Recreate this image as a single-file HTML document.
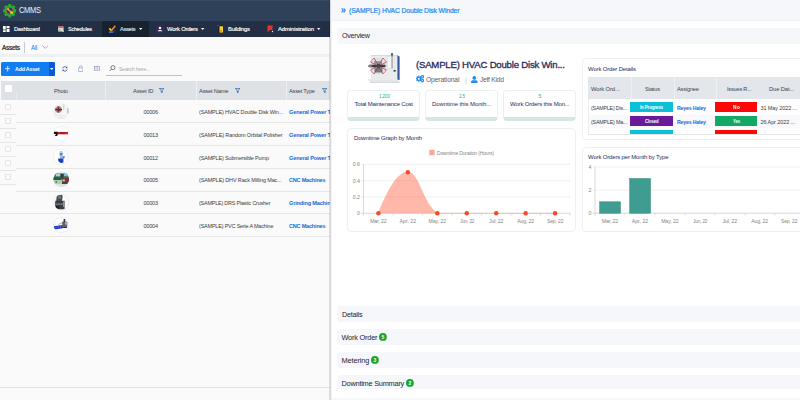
<!DOCTYPE html>
<html><head><meta charset="utf-8">
<style>
*{box-sizing:border-box;margin:0;padding:0}
html,body{width:800px;height:400px;overflow:hidden;background:#fff;font-family:"Liberation Sans",sans-serif;}
body{position:relative}
.abs{position:absolute}
.t{position:absolute;white-space:nowrap;line-height:1}
#left{position:absolute;left:0;top:0;width:330px;height:400px;background:#fafafa;overflow:hidden}
#right{position:absolute;left:330px;top:0;width:470px;height:400px;background:#fff;overflow:hidden}
.bar{position:absolute;left:6.6px;width:470px;height:16px;background:#f5f7fb;border-radius:3px}
.card{position:absolute;background:#fff;border:0.8px solid #edeff2;border-radius:4px}
.hl{position:absolute;height:0.8px;background:#e6e6e6}
.cb{position:absolute;left:4.5px;width:6.6px;height:6.6px;background:#fff;border:0.7px solid #e3e3e3;border-radius:1px}
.badge{position:absolute;height:10px}
</style></head><body>
<div id="left">
<!-- header -->
<div class="abs" style="left:0;top:0;width:330px;height:20.5px;background:#2f4159"></div>
<div class="abs" style="left:0;top:0;width:330px;height:1px;background:#384b64"></div>
<div class="abs" style="left:0;top:20.5px;width:330px;height:16px;background:#222f45"></div>
<div class="abs" style="left:102px;top:20.5px;width:47px;height:16px;background:#18222f"></div>
<!-- logo gear -->
<svg class="abs" style="left:2.8px;top:4.2px" width="13.4" height="13.4" viewBox="0 0 14 14">
  <g fill="#22b02e"><circle cx="7" cy="7" r="5.7"/>
  <rect x="5.5" y="0" width="3" height="14" rx="0.8"/><rect x="0" y="5.5" width="14" height="3" rx="0.8"/>
  <rect x="5.5" y="0" width="3" height="14" rx="0.8" transform="rotate(45 7 7)"/><rect x="5.5" y="0" width="3" height="14" rx="0.8" transform="rotate(-45 7 7)"/></g>
  <circle cx="7" cy="7" r="3.9" fill="#1f3f7a"/>
  <circle cx="7" cy="7" r="3.7" fill="none" stroke="#c87820" stroke-width="0.8"/>
  <path d="M5.4 5.6 L8.8 8.8" stroke="#f59a1c" stroke-width="1.5" stroke-linecap="round"/>
  <circle cx="9" cy="9" r="1.5" fill="#fbc62c"/>
  <circle cx="5.2" cy="5.3" r="1.1" fill="#f7a81c"/>
</svg>
<!-- nav icons -->
<svg class="abs" style="left:3px;top:25.5px" width="6.5" height="6.5" viewBox="0 0 13 13"><g fill="#fff"><rect x="0" y="0" width="5.5" height="7"/><rect x="7" y="0" width="6" height="4"/><rect x="0" y="8.5" width="5.5" height="4.5"/><rect x="7" y="5.5" width="6" height="7.5"/></g></svg>
<svg class="abs" style="left:57.5px;top:26px" width="6.4" height="6.4" viewBox="0 0 14 14"><rect x="0.5" y="1" width="11.5" height="11" fill="#f4f4f4"/><rect x="0.5" y="1" width="11.5" height="3" fill="#d9433a"/><g fill="#8a93a6"><rect x="2" y="5.5" width="2" height="2"/><rect x="5" y="5.5" width="2" height="2"/><rect x="8" y="5.5" width="2" height="2"/><rect x="2" y="8.5" width="2" height="2"/><rect x="5" y="8.5" width="2" height="2"/></g><circle cx="11.5" cy="11.5" r="2" fill="#f0b429"/></svg>
<svg class="abs" style="left:108px;top:24.5px" width="9" height="9" viewBox="0 0 18 18"><rect x="2" y="12.6" width="8.6" height="3.4" fill="#3f6fe0"/><path d="M11 9L16 8.5L15.5 15.5L11 15z" fill="#1c2f7a"/><path d="M2.6 6.4L7 11.6" fill="none" stroke="#ffd21a" stroke-width="3.2"/><path d="M6.2 12L14.6 1.4" fill="none" stroke="#f58a1c" stroke-width="3"/></svg>
<svg class="abs" style="left:155.8px;top:24.5px" width="8" height="8" viewBox="0 0 16 16"><circle cx="8" cy="8" r="7.3" fill="#2a1f6e" stroke="#7a3b3b" stroke-width="0.8"/><circle cx="8" cy="6" r="2.6" fill="#fff"/><path d="M3.5 12.5 C3.5 9 12.5 9 12.5 12.5z" fill="#fff"/></svg>
<svg class="abs" style="left:216.5px;top:24.8px" width="7" height="8" viewBox="0 0 14 16"><rect x="2" y="1" width="10" height="14" fill="#1b2240"/><rect x="5" y="2.5" width="7" height="12.5" fill="#f7d024"/><rect x="6.5" y="10" width="3" height="5" fill="#f08a1c"/><circle cx="2" cy="1" r="1" fill="#d33"/></svg>
<svg class="abs" style="left:266.8px;top:24.8px" width="7" height="8" viewBox="0 0 14 16"><path d="M1 1 H11 V10 L6 10 L1 15z" fill="#e5352b"/><circle cx="11" cy="13" r="1.5" fill="#dfe6f2"/></svg>
<!-- carets -->
<svg class="abs" style="left:139.2px;top:27.5px" width="3.4" height="2" viewBox="0 0 4 2.4"><path d="M0 0H4L2 2.4z" fill="#fff"/></svg>
<svg class="abs" style="left:201.4px;top:27.5px" width="3.4" height="2" viewBox="0 0 4 2.4"><path d="M0 0H4L2 2.4z" fill="#fff"/></svg>
<svg class="abs" style="left:317.4px;top:27.5px" width="3.4" height="2" viewBox="0 0 4 2.4"><path d="M0 0H4L2 2.4z" fill="#fff"/></svg>
<!-- breadcrumb bar -->
<div class="abs" style="left:24.3px;top:42px;width:0.7px;height:10.5px;background:#c9c9c9"></div>
<svg class="abs" style="left:41.8px;top:45.2px" width="6.6" height="4" viewBox="0 0 6.6 4"><path d="M0.4 0.4L3.3 3.4L6.2 0.4" fill="none" stroke="#8a93b5" stroke-width="0.8"/></svg>
<div class="abs" style="left:0;top:54.2px;width:330px;height:2.8px;background:#eff0f4"></div>
<!-- toolbar -->
<div class="abs" style="left:0.5px;top:61.5px;width:54.5px;height:14.5px;background:#117df0;border-radius:1.5px"></div>
<div class="abs" style="left:48.5px;top:61.5px;width:6.5px;height:14.5px;background:#0b59d4;border-radius:0 1.5px 1.5px 0"></div>
<svg class="abs" style="left:5px;top:66.3px" width="5.4" height="5.4" viewBox="0 0 5.4 5.4"><path d="M2.7 0V5.4M0 2.7H5.4" stroke="#fff" stroke-width="0.8"/></svg>
<svg class="abs" style="left:50.3px;top:68px" width="3.4" height="2" viewBox="0 0 3.4 2"><path d="M0 0H3.4L1.7 2z" fill="#fff"/></svg>
<svg class="abs" style="left:61.8px;top:65.8px" width="5.8" height="5.8" viewBox="0 0 13 13"><path d="M1.5 5.5 A5 5 0 0 1 10.5 3.5" fill="none" stroke="#27477f" stroke-width="1.7"/><path d="M11.5 7.5 A5 5 0 0 1 2.5 9.5" fill="none" stroke="#27477f" stroke-width="1.7"/><path d="M11.8 0.8V4.8H7.8z" fill="#27477f"/><path d="M1.2 12.2V8.2H5.2z" fill="#27477f"/></svg>
<svg class="abs" style="left:78px;top:64.8px" width="5.4" height="6.9" viewBox="0 0 10.8 13.8"><rect x="0.8" y="5.6" width="9.2" height="7.4" rx="0.8" fill="none" stroke="#8fa0c8" stroke-width="1.4"/><path d="M3 5.6V3.6a2.4 2.4 0 0 1 4.8 0V5.6" fill="none" stroke="#8fa0c8" stroke-width="1.3"/></svg>
<svg class="abs" style="left:93.9px;top:65.9px" width="5.8" height="5.4" viewBox="0 0 11.6 10.8"><rect x="0.7" y="0.7" width="10.2" height="9.4" fill="none" stroke="#8c98bf" stroke-width="1.3"/><path d="M4.1 0.7V10.1M7.5 0.7V10.1" stroke="#8c98bf" stroke-width="1.1"/></svg>
<svg class="abs" style="left:109.3px;top:65.3px" width="6.6" height="6.6" viewBox="0 0 13.2 13.2"><circle cx="8" cy="5.2" r="4" fill="none" stroke="#4b5563" stroke-width="1.5"/><path d="M5 8.2L1 12.2" stroke="#4b5563" stroke-width="1.6"/></svg>
<div class="abs" style="left:106px;top:74.7px;width:76px;height:0.8px;background:#c2c2c2"></div>
<!-- table header -->
<div class="abs" style="left:1px;top:81px;width:329px;height:18.7px;background:#dee1e6"></div>
<div class="abs" style="left:105.3px;top:81px;width:1px;height:18.7px;background:#eceef1"></div>
<div class="abs" style="left:196.3px;top:81px;width:1px;height:18.7px;background:#eceef1"></div>
<div class="abs" style="left:286.3px;top:81px;width:1px;height:18.7px;background:#eceef1"></div>
<div class="abs" style="left:15.6px;top:93px;width:0.8px;height:6.7px;background:#e9ebee"></div>
<div class="abs" style="left:5px;top:85px;width:6.6px;height:6.6px;background:#fff;border-radius:1px"></div>
<svg class="abs" style="left:158.7px;top:87.7px" width="5.4" height="5.4" viewBox="0 0 10.8 10.8"><path d="M0.8 0.8H10L6.4 5V9.6L4.4 8.4V5z" fill="none" stroke="#2458a6" stroke-width="1.4" stroke-linejoin="round"/></svg>
<svg class="abs" style="left:234.7px;top:87.7px" width="5.4" height="5.4" viewBox="0 0 10.8 10.8"><path d="M0.8 0.8H10L6.4 5V9.6L4.4 8.4V5z" fill="none" stroke="#2458a6" stroke-width="1.4" stroke-linejoin="round"/></svg>
<svg class="abs" style="left:321.7px;top:87.7px" width="5.4" height="5.4" viewBox="0 0 10.8 10.8"><path d="M0.8 0.8H10L6.4 5V9.6L4.4 8.4V5z" fill="none" stroke="#2458a6" stroke-width="1.4" stroke-linejoin="round"/></svg>
<!-- row separators -->
<div class="hl" style="left:16px;top:122.3px;width:314px"></div>
<div class="hl" style="left:16px;top:145.1px;width:314px"></div>
<div class="hl" style="left:16px;top:167.9px;width:314px"></div>
<div class="hl" style="left:16px;top:190.7px;width:314px"></div>
<div class="hl" style="left:0px;top:213.4px;width:330px"></div>
<div class="hl" style="left:0px;top:236.2px;width:330px"></div>
<div class="hl" style="left:0px;top:386.7px;width:330px;background:#e2e2e2"></div>
<!-- checkbox col -->
<div class="hl" style="left:0;top:113.9px;width:16px"></div>
<div class="hl" style="left:0;top:127.9px;width:16px"></div>
<div class="hl" style="left:0;top:141.9px;width:16px"></div>
<div class="hl" style="left:0;top:155.9px;width:16px"></div>
<div class="hl" style="left:0;top:169.9px;width:16px"></div>
<div class="hl" style="left:0;top:183.9px;width:16px"></div>
<div class="cb" style="top:103.6px"></div><div class="cb" style="top:117.6px"></div><div class="cb" style="top:131.6px"></div>
<div class="cb" style="top:145.6px"></div><div class="cb" style="top:159.6px"></div><div class="cb" style="top:173.6px"></div>
<!-- thumbnails -->
<svg class="abs" style="left:45px;top:100px" width="32" height="140" viewBox="45 100 32 140">
<defs>
<clipPath id="k1"><circle cx="61.4" cy="111.2" r="7.7"/></clipPath>
<clipPath id="k4"><circle cx="61.2" cy="179.3" r="7.8"/></clipPath>
<clipPath id="k5"><circle cx="61.2" cy="202.2" r="7.5"/></clipPath>
<clipPath id="k6"><circle cx="61.2" cy="225" r="7.5"/></clipPath>
</defs>
<!-- 1 winder -->
<circle cx="61.4" cy="111.2" r="7.8" fill="#e9e9e9"/>
<g clip-path="url(#k1)">
  <path d="M55.5 104H66.5L68.5 107V117H55.5z" fill="#f6f6f6"/>
  <rect x="67.2" y="108" width="1.3" height="5.5" fill="#a9bedd"/>
  <rect x="63.5" y="104" width="0.7" height="6" fill="#b9bcc0"/>
  <circle cx="58.5" cy="109.4" r="3.2" fill="#a83640" opacity=".8"/>
  <path d="M56.3 107.2L60.7 111.6M60.7 107.2L56.3 111.6" stroke="#f0e6e6" stroke-width="0.6"/>
  <circle cx="58.5" cy="109.4" r="1.5" fill="#6a1822"/>
  <rect x="55" y="109" width="7" height="1.2" fill="#3a3538" opacity=".85"/>
  <rect x="57.8" y="106.2" width="1.2" height="6.8" fill="#4a4448" opacity=".55"/>
  <path d="M55.5 115.5H66" stroke="#d2d2d2" stroke-width="0.8" stroke-dasharray="1 1"/>
</g>
<!-- 2 polisher -->
<circle cx="61.2" cy="133.8" r="7.5" fill="#fefefe" stroke="#e7e7e7" stroke-width="0.6"/>
<rect x="57.5" y="132" width="10.5" height="2.3" fill="#d3202a"/>
<rect x="60" y="132.6" width="5" height="1.1" fill="#7a1a1e"/>
<path d="M54 131.8H57.8V134.6L57 136H54.8L56 134H54z" fill="#141212"/>
<!-- 3 pump -->
<circle cx="61" cy="156.5" r="7.5" fill="#fefefe" stroke="#e7e7e7" stroke-width="0.6"/>
<rect x="59.7" y="151" width="2.9" height="2.2" fill="#c6c8cc"/>
<rect x="59.7" y="153" width="2.9" height="2.6" fill="#2f8fe6"/>
<rect x="59.9" y="155.6" width="2.5" height="3.6" fill="#b9bbbf"/>
<rect x="62.5" y="156" width="2" height="2.4" fill="#2f6fd6"/>
<rect x="62.9" y="156.2" width="0.9" height="0.9" fill="#e8d23a"/>
<path d="M58 159.3C58 158.6 59 158.4 60 158.6H63.4V162.6C61 163.6 58.2 162.6 58 159.3z" fill="#1f3fc4"/>
<!-- 4 factory -->
<g clip-path="url(#k4)">
  <rect x="53" y="171" width="17" height="17" fill="#e9ecea"/>
  <rect x="53" y="173.3" width="17" height="5.4" fill="#4f7f78"/>
  <rect x="56" y="173.6" width="4.5" height="2.6" fill="#a7d9d2"/>
  <rect x="64" y="172.8" width="3.6" height="3.2" fill="#7fc4e6"/>
  <rect x="60.5" y="174" width="3" height="4" fill="#27403c"/>
  <rect x="53" y="177" width="8.5" height="3.3" fill="#2f5a44"/>
  <rect x="61.5" y="177.6" width="8" height="6.6" fill="#5a4038"/>
  <rect x="66" y="177.5" width="3" height="4" fill="#8f2f3a"/>
  <rect x="62.5" y="179.5" width="2.4" height="1.8" fill="#d8c9b4"/>
  <rect x="53" y="180.3" width="9" height="4" fill="#9fd6b4"/>
  <rect x="55.5" y="181" width="1.5" height="2" fill="#c05a5a"/>
  <rect x="53" y="184.3" width="17" height="3" fill="#dfe3e1"/>
</g>
<!-- 5 crusher -->
<circle cx="61.2" cy="202.2" r="7.6" fill="#fbfbfb" stroke="#e4e4e4" stroke-width="0.6"/>
<g clip-path="url(#k5)">
  <path d="M57.2 194.6L61.8 194.2L62.6 196L62 201H56.2L56.6 197z" fill="#474b51"/>
  <path d="M58 195.5L61 195.2L61.2 198.5L58 199z" fill="#6e737a"/>
  <rect x="55.2" y="200.8" width="9.4" height="8.6" fill="#3a3e44"/>
  <rect x="56" y="203.5" width="7.6" height="1.2" fill="#80858c"/>
  <rect x="63" y="201.5" width="1.8" height="5.5" fill="#8f949b"/>
  <rect x="56.2" y="206" width="3" height="2.6" fill="#22262b"/>
</g>
<!-- 6 pvc -->
<circle cx="61.2" cy="225" r="7.6" fill="#fdfdfd" stroke="#e4e4e4" stroke-width="0.6"/>
<g clip-path="url(#k6)">
  <path d="M54 226.2L62.6 225L62.8 228.3L54 229.4z" fill="#1a2fb4"/>
  <path d="M55.5 226.8h1v1.5h-1zM57.7 226.5h1v1.5h-1zM59.9 226.2h1v1.5h-1z" fill="#6f7fe0"/>
  <rect x="62.2" y="221.6" width="5" height="5.8" fill="#59636f"/>
  <rect x="63.6" y="219" width="1.6" height="3" fill="#2b3440"/>
  <rect x="65" y="222.4" width="2.6" height="2.2" fill="#aab6c4"/>
  <rect x="62.6" y="227" width="4.4" height="1" fill="#2b3440"/>
  <path d="M58.5 224.6L62 222.8" stroke="#7f8a96" stroke-width="0.7"/>
</g>
</svg>
<!-- right edge shadow -->
<div class="abs" style="left:329.2px;top:0;width:0.8px;height:400px;background:rgba(0,0,0,0.10)"></div>

</div>
<div id="right">
<!-- panel left edge -->
<div class="abs" style="left:0;top:0;width:0.7px;height:400px;background:#d9d9d9"></div>
<div class="abs" style="left:0.7px;top:0;width:0.8px;height:400px;background:#f4f4f4"></div>
<!-- header -->
<div class="abs" style="left:1.6px;top:0;width:468.4px;height:20.5px;background:#f5f7fb"></div>
<div class="abs" style="left:2px;top:19.7px;width:468px;height:1px;background:#eef1f6"></div>
<svg class="abs" style="left:11.3px;top:8.3px" width="5" height="4.8" viewBox="0 0 10 9.6"><path d="M1.2 0.8L4.4 4.8L1.2 8.8M5.2 0.8L8.4 4.8L5.2 8.8" fill="none" stroke="#1e8df2" stroke-width="2.2"/></svg>
<!-- accordion bars -->
<div class="bar" style="top:27.7px"></div>
<div class="bar" style="top:306px"></div>
<div class="bar" style="top:329px"></div>
<div class="bar" style="top:352.2px"></div>
<div class="bar" style="top:375.4px;height:13.2px;border-radius:3px 3px 0 0"></div>
<div class="abs" style="left:2px;top:397.5px;width:468px;height:3px;background:#f5f7fb"></div>
<!-- count badges -->
<svg class="abs" style="left:49.3px;top:333.3px" width="7.8" height="7.8" viewBox="0 0 7.8 7.8"><circle cx="3.9" cy="3.9" r="3.9" fill="#17a42b"/><text x="3.9" y="5.6" font-size="5" font-weight="bold" fill="#fff" text-anchor="middle" font-family="Liberation Sans">5</text></svg>
<svg class="abs" style="left:41.3px;top:356.3px" width="7.8" height="7.8" viewBox="0 0 7.8 7.8"><circle cx="3.9" cy="3.9" r="3.9" fill="#17a42b"/><text x="3.9" y="5.6" font-size="5" font-weight="bold" fill="#fff" text-anchor="middle" font-family="Liberation Sans">3</text></svg>
<svg class="abs" style="left:76px;top:379.2px" width="7.8" height="7.8" viewBox="0 0 7.8 7.8"><circle cx="3.9" cy="3.9" r="3.9" fill="#17a42b"/><text x="3.9" y="5.6" font-size="5" font-weight="bold" fill="#fff" text-anchor="middle" font-family="Liberation Sans">2</text></svg>
<!-- machine image -->
<svg class="abs" style="left:36px;top:52px" width="36" height="32" viewBox="0 0 36 32">
  <path d="M2 27.2L31.5 27.2L34 30.2L4 30.2z" fill="#e3e5e8"/>
  <path d="M4 30.2L34 30.2L34 30.9L4 30.9z" fill="#c9ccd0"/>
  <rect x="5" y="3.2" width="26.5" height="24" fill="#e9ebed"/>
  <rect x="5" y="3.2" width="26.5" height="0.8" fill="#d3d6da"/>
  <path d="M31.4 3.6L33.6 4.4V28L31.4 27.4z" fill="#34549a"/>
  <rect x="31.2" y="3.4" width="0.7" height="24" fill="#7f97c4"/>
  <rect x="21.5" y="4.5" width="6.5" height="12" fill="#f6f7f8" stroke="#c9cdd2" stroke-width="0.4"/>
  <rect x="25.6" y="1.2" width="0.9" height="15" fill="#70757c"/>
  <rect x="25" y="1.2" width="2" height="2.4" fill="#555a60"/>
  <rect x="27.6" y="18" width="2" height="1.6" fill="#2b2f36"/>
  <circle cx="12.5" cy="14" r="8.6" fill="#dfe1e4"/>
  <g stroke="#cf3540" stroke-width="0.8" fill="none" stroke-linejoin="round">
    <path d="M8 6L12.5 13.5L17 6M8 22L12.5 14.5L17 22M4.5 10L12 14L4.5 18M20.5 10L13 14L20.5 18"/>
    <path d="M17 6L20.5 10M17 22L20.5 18M8 6L4.5 10M8 22L4.5 18" stroke-width="0.6"/>
  </g>
  <rect x="8" y="9.2" width="8" height="3" fill="#767074" opacity=".7"/>
  <rect x="8.5" y="16" width="8" height="4.5" fill="#5e585c" opacity=".75"/>
  <rect x="2.5" y="12.8" width="17" height="2.4" rx="0.8" fill="#3f3a3e"/>
  <rect x="2.5" y="13.3" width="3.2" height="1.4" fill="#9a9fa6"/>
  <circle cx="12.6" cy="14" r="2.2" fill="#4a4448"/>
</svg>
<!-- cogs + user icons -->
<svg class="abs" style="left:86px;top:75.3px" width="8.4" height="7.4" viewBox="0 0 16.8 14.8"><g fill="#1e8df2"><circle cx="5.6" cy="7.4" r="4.6"/><g><rect x="4.4" y="1.2" width="2.4" height="12.4"/><rect x="-0.6" y="6.2" width="12.4" height="2.4"/><rect x="4.4" y="1.2" width="2.4" height="12.4" transform="rotate(45 5.6 7.4)"/><rect x="4.4" y="1.2" width="2.4" height="12.4" transform="rotate(-45 5.6 7.4)"/></g><circle cx="13.2" cy="3.6" r="2.6"/><rect x="12.4" y="0" width="1.6" height="7.2"/><rect x="9.6" y="2.8" width="7.2" height="1.6"/><rect x="12.4" y="0" width="1.6" height="7.2" transform="rotate(45 13.2 3.6)"/><rect x="12.4" y="0" width="1.6" height="7.2" transform="rotate(-45 13.2 3.6)"/><circle cx="13.2" cy="11.2" r="2.6"/><rect x="12.4" y="7.6" width="1.6" height="7.2"/><rect x="9.6" y="10.4" width="7.2" height="1.6"/><rect x="12.4" y="7.6" width="1.6" height="7.2" transform="rotate(45 13.2 11.2)"/><rect x="12.4" y="7.6" width="1.6" height="7.2" transform="rotate(-45 13.2 11.2)"/></g><circle cx="5.6" cy="7.4" r="1.9" fill="#fff"/><circle cx="13.2" cy="3.6" r="1" fill="#fff"/><circle cx="13.2" cy="11.2" r="1" fill="#fff"/></svg>
<svg class="abs" style="left:141px;top:75.8px" width="6.6" height="7.4" viewBox="0 0 13.2 14.8"><circle cx="6.6" cy="3.8" r="3.7" fill="#1e8df2"/><path d="M0 14.8V12.4C0 9.6 2.2 8.6 4 8.6H9.2C11 8.6 13.2 9.6 13.2 12.4V14.8z" fill="#1e8df2"/></svg>
<!-- stat cards -->
<div class="card" style="left:17.3px;top:90.3px;width:72.4px;height:30.9px;border-bottom:4px solid #d3e9df"></div>
<div class="card" style="left:95.3px;top:90.3px;width:72.4px;height:30.9px;border-bottom:4px solid #d3e9df"></div>
<div class="card" style="left:173.3px;top:90.3px;width:72.4px;height:30.9px;border-bottom:4px solid #d3e9df"></div>
<!-- downtime chart card -->
<div class="card" style="left:17.3px;top:128.2px;width:228.5px;height:104px"></div>
<svg class="abs" style="left:0;top:0" width="470" height="400" viewBox="330 0 470 400">
  <g stroke="#e9e9e9" stroke-width="0.7">
    <path d="M361 164.4H570.5M361 180.7H570.5M361 197H570.5"/>
  </g>
  <path d="M361 213.3H570.5" stroke="#cfcfcf" stroke-width="0.8"/>
  <path d="M363.5 164V215.5" stroke="#cfcfcf" stroke-width="0.8"/>
  <path d="M393.1 213.3v2.2M422.6 213.3v2.2M452 213.3v2.2M481.5 213.3v2.2M510.9 213.3v2.2M540.4 213.3v2.2M569.8 213.3v2.2" stroke="#cfcfcf" stroke-width="0.7"/>
  <rect x="429.5" y="150" width="4.8" height="5" fill="#f8ab9c" stroke="#f58f7d" stroke-width="0.3"/>
  <path d="M378.4,213.3 C388,190 397,172.3 407.85,172.3 C419.2,172.3 421.9,203 437.3,213.3 L555.1,213.3 Z" fill="#ff5533" fill-opacity="0.42"/>
  <path d="M378.4,213.3 C388,190 397,172.3 407.85,172.3 C419.2,172.3 421.9,203 437.3,213.3 L555.1,213.3" fill="none" stroke="#ff9a86" stroke-width="0.5"/>
  <g fill="#fb4527">
    <circle cx="378.4" cy="213.3" r="2.2"/><circle cx="407.85" cy="172.3" r="2.2"/><circle cx="437.3" cy="213.3" r="2.2"/><circle cx="466.75" cy="213.3" r="2.2"/><circle cx="496.2" cy="213.3" r="2.2"/><circle cx="525.65" cy="213.3" r="2.2"/><circle cx="555.1" cy="213.3" r="2.2"/>
  </g>
</svg>
<!-- work order details card -->
<div class="card" style="left:251.8px;top:58.3px;width:230px;height:81.3px"></div>
<div class="abs" style="left:258px;top:77px;width:212px;height:56.8px;overflow:hidden">
  <div class="abs" style="left:0;top:0;width:212px;height:22px;background:#e3e6ea"></div>
  <div class="abs" style="left:43px;top:0;width:0.8px;height:22px;background:#eef0f2"></div>
  <div class="abs" style="left:85.7px;top:0;width:0.8px;height:22px;background:#eef0f2"></div>
  <div class="abs" style="left:128.4px;top:0;width:0.8px;height:22px;background:#eef0f2"></div>
  <div class="abs" style="left:0;top:37.5px;width:212px;height:13.5px;background:#f9f9fb"></div>
  <div class="badge" style="left:42.2px;top:25px;width:42.8px;height:9.8px;background:#0cc0d7"></div>
  <div class="badge" style="left:42.2px;top:39px;width:42.8px;background:#6a1b99"></div>
  <div class="badge" style="left:42.2px;top:53px;width:42.8px;background:#0cc0d7"></div>
  <div class="badge" style="left:127px;top:25px;width:42.4px;height:9.8px;background:#fd0808"></div>
  <div class="badge" style="left:127px;top:39px;width:42.4px;background:#12a866"></div>
  <div class="badge" style="left:127px;top:53px;width:42.4px;background:#fd0808"></div>
</div>
<div class="abs" style="left:258px;top:99px;width:0.7px;height:35px;background:#ececec"></div>
<div class="abs" style="left:258px;top:133.6px;width:212px;height:0.7px;background:#e6e6e6"></div>
<!-- bar chart card -->
<div class="card" style="left:251.8px;top:146.6px;width:230px;height:85.6px"></div>
<svg class="abs" style="left:0;top:0" width="470" height="400" viewBox="330 0 470 400">
  <g stroke="#e9e9e9" stroke-width="0.7"><path d="M592.5 167H800M592.5 190.1H800"/></g>
  <path d="M592.5 213.2H800" stroke="#cfcfcf" stroke-width="0.8"/>
  <path d="M595 166.6V215.4" stroke="#cfcfcf" stroke-width="0.8"/>
  <path d="M625 213.2v2.2M655 213.2v2.2M685 213.2v2.2M715 213.2v2.2M745 213.2v2.2M775 213.2v2.2" stroke="#cfcfcf" stroke-width="0.7"/>
  <rect x="599.7" y="201.8" width="20.8" height="11.4" fill="#3f9c90" stroke="#2f8579" stroke-width="0.5"/>
  <rect x="629.7" y="178.5" width="20.8" height="34.7" fill="#3f9c90" stroke="#2f8579" stroke-width="0.5"/>
</svg>

</div>
<div class="abs" style="left:0;top:0;width:330px;height:400px;overflow:hidden"><div class="t" style="left:19.00px;top:6px;font-size:9.0px;color:#eef2f7;letter-spacing:-0.315px;transform:scaleX(0.8285);transform-origin:0 50%;">CMMS</div>
<div class="t" style="left:14.00px;top:26px;font-size:6.0px;color:#fff;letter-spacing:-0.210px;transform:scaleX(0.9393);transform-origin:0 50%;-webkit-text-stroke:0.15px #fff;">Dashboard</div>
<div class="t" style="left:68.00px;top:26px;font-size:6.0px;color:#fff;letter-spacing:-0.210px;transform:scaleX(0.9108);transform-origin:0 50%;-webkit-text-stroke:0.15px #fff;">Schedules</div>
<div class="t" style="left:120.00px;top:26px;font-size:6.0px;color:#dfe4ec;letter-spacing:-0.210px;transform:scaleX(0.9136);transform-origin:0 50%;-webkit-text-stroke:0.15px #dfe4ec;">Assets</div>
<div class="t" style="left:167.00px;top:26px;font-size:6.0px;color:#fff;letter-spacing:-0.210px;transform:scaleX(0.9747);transform-origin:0 50%;-webkit-text-stroke:0.15px #fff;">Work Orders</div>
<div class="t" style="left:228.00px;top:26px;font-size:6.0px;color:#fff;letter-spacing:-0.210px;transform:scaleX(0.9700);transform-origin:0 50%;-webkit-text-stroke:0.15px #fff;">Buildings</div>
<div class="t" style="left:278.00px;top:26px;font-size:6.0px;color:#fff;letter-spacing:-0.155px;-webkit-text-stroke:0.15px #fff;">Administration</div>
<div class="t" style="left:2.00px;top:45px;font-size:6.6px;color:#1c1c1c;letter-spacing:-0.231px;transform:scaleX(0.9656);transform-origin:0 50%;-webkit-text-stroke:0.22px #1c1c1c;">Assets</div>
<div class="t" style="left:30.50px;top:45px;font-size:6.4px;color:#2b7de9;letter-spacing:-0.224px;transform:scaleX(0.9758);transform-origin:0 50%;">All</div>
<div class="t" style="left:15.00px;top:67px;font-size:5.8px;color:#fff;letter-spacing:-0.203px;transform:scaleX(0.9132);transform-origin:0 50%;font-weight:bold;">Add Asset</div>
<div class="t" style="left:119.00px;top:67px;font-size:5.5px;color:#a9a9a9;letter-spacing:-0.193px;transform:scaleX(0.9674);transform-origin:0 50%;">Search here...</div>
<div class="t" style="left:54.00px;top:88px;font-size:6.0px;color:#40454c;letter-spacing:-0.210px;transform:scaleX(0.9429);transform-origin:0 50%;">Photo</div>
<div class="t" style="left:132.50px;top:88px;font-size:6.0px;color:#40454c;letter-spacing:-0.210px;transform:scaleX(0.9662);transform-origin:0 50%;">Asset ID</div>
<div class="t" style="left:199.00px;top:88px;font-size:6.0px;color:#40454c;letter-spacing:-0.210px;transform:scaleX(0.9579);transform-origin:0 50%;">Asset Name</div>
<div class="t" style="left:289.00px;top:88px;font-size:6.0px;color:#40454c;letter-spacing:-0.210px;transform:scaleX(0.9390);transform-origin:0 50%;">Asset Type</div>
<div class="t" style="left:143.50px;top:110px;font-size:5.5px;color:#3a3a3a;letter-spacing:-0.193px;">00006</div>
<div class="t" style="left:199.00px;top:110px;font-size:5.5px;color:#3a3a3a;letter-spacing:-0.166px;">(SAMPLE) HVAC Double Disk Win...</div>
<div class="t" style="left:289.00px;top:110px;font-size:5.6px;color:#1768d6;letter-spacing:-0.152px;font-weight:bold;">General Power Tools</div>
<div class="t" style="left:143.50px;top:133px;font-size:5.5px;color:#3a3a3a;letter-spacing:-0.193px;">00013</div>
<div class="t" style="left:199.00px;top:133px;font-size:5.5px;color:#3a3a3a;letter-spacing:-0.127px;">(SAMPLE) Random Orbital Polisher</div>
<div class="t" style="left:289.00px;top:133px;font-size:5.6px;color:#1768d6;letter-spacing:-0.152px;font-weight:bold;">General Power Tools</div>
<div class="t" style="left:143.50px;top:156px;font-size:5.5px;color:#3a3a3a;letter-spacing:-0.193px;">00012</div>
<div class="t" style="left:199.00px;top:156px;font-size:5.5px;color:#3a3a3a;letter-spacing:-0.166px;">(SAMPLE) Submersible Pump</div>
<div class="t" style="left:289.00px;top:156px;font-size:5.6px;color:#1768d6;letter-spacing:-0.152px;font-weight:bold;">General Power Tools</div>
<div class="t" style="left:143.50px;top:178px;font-size:5.5px;color:#3a3a3a;letter-spacing:-0.193px;">00005</div>
<div class="t" style="left:199.00px;top:178px;font-size:5.5px;color:#3a3a3a;letter-spacing:-0.139px;">(SAMPLE) DHV Rack Milling Mac...</div>
<div class="t" style="left:289.00px;top:178px;font-size:5.6px;color:#1768d6;letter-spacing:-0.196px;transform:scaleX(0.9861);transform-origin:0 50%;font-weight:bold;">CNC Machines</div>
<div class="t" style="left:143.50px;top:201px;font-size:5.5px;color:#3a3a3a;letter-spacing:-0.193px;">00003</div>
<div class="t" style="left:199.00px;top:201px;font-size:5.5px;color:#3a3a3a;letter-spacing:-0.193px;transform:scaleX(0.9830);transform-origin:0 50%;">(SAMPLE) DRS Plastic Crusher</div>
<div class="t" style="left:289.00px;top:201px;font-size:5.6px;color:#1768d6;letter-spacing:-0.179px;font-weight:bold;">Grinding Machines</div>
<div class="t" style="left:143.50px;top:224px;font-size:5.5px;color:#3a3a3a;letter-spacing:-0.193px;">00004</div>
<div class="t" style="left:199.00px;top:224px;font-size:5.5px;color:#3a3a3a;letter-spacing:-0.193px;transform:scaleX(0.9947);transform-origin:0 50%;">(SAMPLE) PVC Serie A Machine</div>
<div class="t" style="left:289.00px;top:224px;font-size:5.6px;color:#1768d6;letter-spacing:-0.196px;transform:scaleX(0.9861);transform-origin:0 50%;font-weight:bold;">CNC Machines</div></div>
<div class="t" style="left:349.00px;top:8px;font-size:6.8px;color:#1e8df2;letter-spacing:-0.123px;-webkit-text-stroke:0.22px #1e8df2;">(SAMPLE) HVAC Double Disk Winder</div>
<div class="t" style="left:341.50px;top:32px;font-size:7.4px;color:#1f2430;letter-spacing:-0.259px;transform:scaleX(0.9655);transform-origin:0 50%;">Overview</div>
<div class="t" style="left:341.50px;top:311px;font-size:7.4px;color:#1f2430;letter-spacing:-0.259px;transform:scaleX(0.9743);transform-origin:0 50%;">Details</div>
<div class="t" style="left:341.50px;top:334px;font-size:7.4px;color:#1f2430;letter-spacing:-0.229px;">Work Order</div>
<div class="t" style="left:341.50px;top:357px;font-size:7.4px;color:#1f2430;letter-spacing:-0.138px;">Metering</div>
<div class="t" style="left:341.50px;top:380px;font-size:7.4px;color:#1f2430;letter-spacing:-0.249px;">Downtime Summary</div>
<div class="t" style="left:416.00px;top:60px;font-size:9.6px;color:#2c2b5c;letter-spacing:-0.210px;-webkit-text-stroke:0.32px #2c2b5c;">(SAMPLE) HVAC Double Disk Win...</div>
<div class="t" style="left:426.00px;top:77px;font-size:6.8px;color:#5b6472;letter-spacing:-0.164px;">Operational</div>
<div class="t" style="left:465.00px;top:76px;font-size:7px;color:#c8ccd2;letter-spacing:0.000px;">|</div>
<div class="t" style="left:479.50px;top:77px;font-size:6.8px;color:#5b6472;letter-spacing:-0.238px;transform:scaleX(0.9826);transform-origin:0 50%;">Jeff Kidd</div>
<div class="t" style="left:378.50px;top:94px;font-size:5.0px;color:#27b38d;letter-spacing:-0.175px;transform:scaleX(0.9310);transform-origin:0 50%;">1,200</div>
<div class="t" style="left:458.50px;top:94px;font-size:5.0px;color:#27b38d;letter-spacing:-0.175px;transform:scaleX(0.9087);transform-origin:0 50%;">2.5</div>
<div class="t" style="left:538.50px;top:94px;font-size:5.0px;color:#27b38d;letter-spacing:0.000px;">5</div>
<div class="t" style="left:354.50px;top:101px;font-size:6.0px;color:#2c2b5c;letter-spacing:-0.200px;">Total Maintenance Cost</div>
<div class="t" style="left:432.00px;top:101px;font-size:6.0px;color:#2c2b5c;letter-spacing:-0.097px;">Downtime this Month...</div>
<div class="t" style="left:510.00px;top:101px;font-size:6.0px;color:#2c2b5c;letter-spacing:-0.170px;">Work Orders this Mon...</div>
<div class="t" style="left:354.00px;top:135px;font-size:6.0px;color:#2c2b5c;letter-spacing:-0.153px;">Downtime Graph by Month</div>
<div class="t" style="left:437.00px;top:151px;font-size:5.0px;color:#868686;letter-spacing:-0.149px;">Downtime Duration (Hours)</div>
<div class="t" style="left:352.80px;top:162px;font-size:5.2px;color:#868686;letter-spacing:-0.109px;">0.6</div>
<div class="t" style="left:352.80px;top:179px;font-size:5.2px;color:#868686;letter-spacing:-0.109px;">0.4</div>
<div class="t" style="left:352.80px;top:195px;font-size:5.2px;color:#868686;letter-spacing:-0.109px;">0.2</div>
<div class="t" style="left:357.00px;top:211px;font-size:5.2px;color:#868686;letter-spacing:0.000px;">0</div>
<div class="t" style="left:370.15px;top:219px;font-size:5.2px;color:#868686;letter-spacing:-0.135px;">Mar, 22</div>
<div class="t" style="left:399.60px;top:219px;font-size:5.2px;color:#868686;letter-spacing:0.008px;">Apr, 22</div>
<div class="t" style="left:428.55px;top:219px;font-size:5.2px;color:#868686;letter-spacing:-0.096px;">May, 22</div>
<div class="t" style="left:459.50px;top:219px;font-size:5.2px;color:#868686;letter-spacing:-0.182px;transform:scaleX(0.9097);transform-origin:0 50%;">Jun, 22</div>
<div class="t" style="left:488.95px;top:219px;font-size:5.2px;color:#868686;letter-spacing:-0.133px;">Jul, 22</div>
<div class="t" style="left:517.15px;top:219px;font-size:5.2px;color:#868686;letter-spacing:-0.148px;">Aug, 22</div>
<div class="t" style="left:546.85px;top:219px;font-size:5.2px;color:#868686;letter-spacing:-0.182px;transform:scaleX(0.9822);transform-origin:0 50%;">Sep, 22</div>
<div class="t" style="left:588.00px;top:66px;font-size:6.0px;color:#2c2b5c;letter-spacing:-0.171px;">Work Order Details</div>
<div class="t" style="left:591.00px;top:87px;font-size:5.8px;color:#40454c;letter-spacing:-0.103px;">Work Ord...</div>
<div class="t" style="left:645.00px;top:87px;font-size:5.8px;color:#40454c;letter-spacing:-0.203px;transform:scaleX(0.9726);transform-origin:0 50%;">Status</div>
<div class="t" style="left:677.00px;top:87px;font-size:5.8px;color:#40454c;letter-spacing:-0.203px;transform:scaleX(0.9805);transform-origin:0 50%;">Assignee</div>
<div class="t" style="left:726.50px;top:87px;font-size:5.8px;color:#40454c;letter-spacing:-0.203px;transform:scaleX(0.9661);transform-origin:0 50%;">Issues R...</div>
<div class="t" style="left:769.00px;top:87px;font-size:5.8px;color:#40454c;letter-spacing:-0.123px;">Due Dat...</div>
<div class="t" style="left:591.00px;top:106px;font-size:5.5px;color:#3a3a3a;letter-spacing:-0.193px;transform:scaleX(0.9638);transform-origin:0 50%;">(SAMPLE) Dis...</div>
<div class="t" style="left:591.00px;top:120px;font-size:5.5px;color:#3a3a3a;letter-spacing:-0.193px;transform:scaleX(0.9669);transform-origin:0 50%;">(SAMPLE) Ma...</div>
<div class="t" style="left:640.00px;top:106px;font-size:4.5px;color:#fff;letter-spacing:-0.158px;transform:scaleX(0.9918);transform-origin:0 50%;font-weight:bold;">In Progress</div>
<div class="t" style="left:645.00px;top:120px;font-size:4.5px;color:#fff;letter-spacing:-0.158px;transform:scaleX(0.9488);transform-origin:0 50%;font-weight:bold;">Closed</div>
<div class="t" style="left:676.50px;top:106px;font-size:5.4px;color:#1768d6;letter-spacing:-0.189px;transform:scaleX(0.9702);transform-origin:0 50%;font-weight:bold;">Reyes Haley</div>
<div class="t" style="left:676.50px;top:120px;font-size:5.4px;color:#1768d6;letter-spacing:-0.189px;transform:scaleX(0.9702);transform-origin:0 50%;font-weight:bold;">Reyes Haley</div>
<div class="t" style="left:733.00px;top:106px;font-size:4.5px;color:#fff;letter-spacing:0.540px;transform:scaleX(1.0703);transform-origin:0 50%;font-weight:bold;">No</div>
<div class="t" style="left:733.00px;top:120px;font-size:4.5px;color:#fff;letter-spacing:-0.158px;transform:scaleX(0.9395);transform-origin:0 50%;font-weight:bold;">Yes</div>
<div class="t" style="left:760.50px;top:106px;font-size:5.5px;color:#3a3a3a;letter-spacing:-0.102px;">31 May 2022 ...</div>
<div class="t" style="left:760.50px;top:120px;font-size:5.5px;color:#3a3a3a;letter-spacing:-0.092px;">26 Apr 2022 ...</div>
<div class="t" style="left:588.00px;top:154px;font-size:6.0px;color:#2c2b5c;letter-spacing:-0.166px;">Work Orders per Month by Type</div>
<div class="t" style="left:588.60px;top:165px;font-size:5.2px;color:#868686;letter-spacing:0.000px;">4</div>
<div class="t" style="left:588.60px;top:188px;font-size:5.2px;color:#868686;letter-spacing:0.000px;">2</div>
<div class="t" style="left:588.60px;top:211px;font-size:5.2px;color:#868686;letter-spacing:0.000px;">0</div>
<div class="t" style="left:601.75px;top:219px;font-size:5.2px;color:#868686;letter-spacing:-0.135px;">Mar, 22</div>
<div class="t" style="left:631.70px;top:219px;font-size:5.2px;color:#868686;letter-spacing:0.008px;">Apr, 22</div>
<div class="t" style="left:661.15px;top:219px;font-size:5.2px;color:#868686;letter-spacing:-0.096px;">May, 22</div>
<div class="t" style="left:692.60px;top:219px;font-size:5.2px;color:#868686;letter-spacing:-0.182px;transform:scaleX(0.9097);transform-origin:0 50%;">Jun, 22</div>
<div class="t" style="left:722.55px;top:219px;font-size:5.2px;color:#868686;letter-spacing:-0.133px;">Jul, 22</div>
<div class="t" style="left:751.25px;top:219px;font-size:5.2px;color:#868686;letter-spacing:-0.148px;">Aug, 22</div>
<div class="t" style="left:781.45px;top:219px;font-size:5.2px;color:#868686;letter-spacing:-0.182px;transform:scaleX(0.9822);transform-origin:0 50%;">Sep, 22</div>
</body></html>
